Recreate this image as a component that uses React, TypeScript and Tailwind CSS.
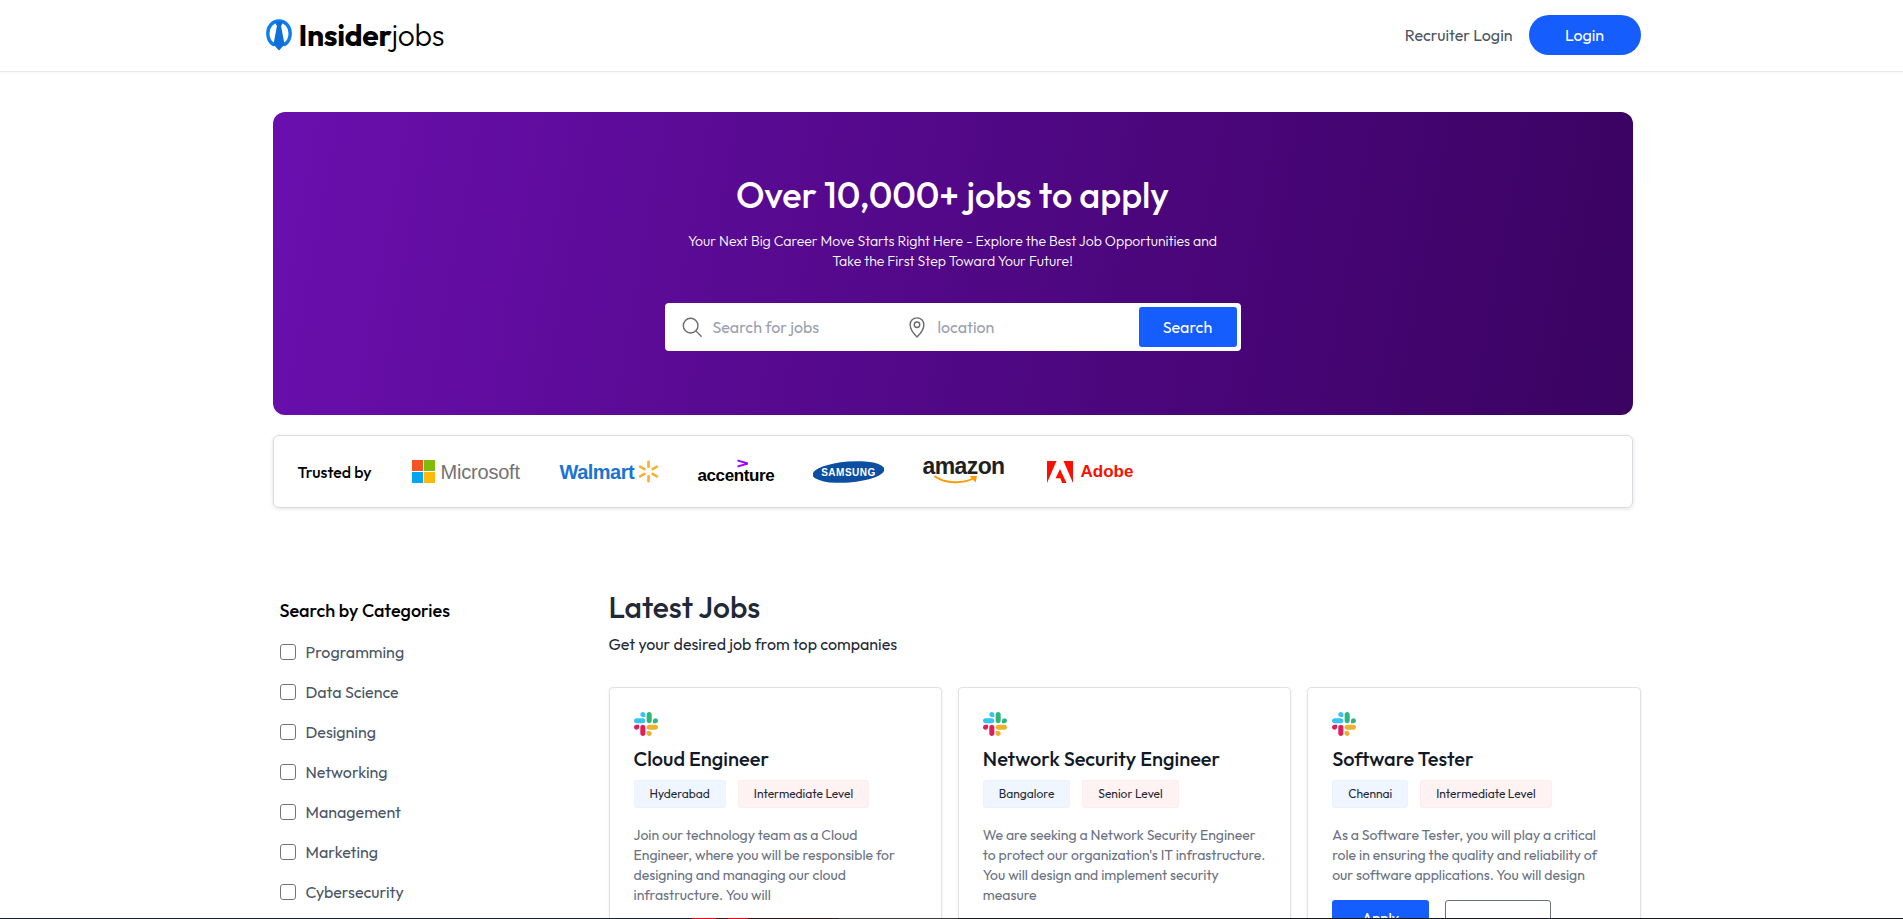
const F = "font-['Outfit','Lato','Noto_Sans',sans-serif]";
const A = "font-['Liberation_Sans',sans-serif]";

function Slack() {
  return (
    <svg viewBox="0 0 122.8 122.8" className="w-6 h-6">
      <path d="M25.8 77.6c0 7.1-5.8 12.9-12.9 12.9S0 84.7 0 77.6s5.8-12.9 12.9-12.9h12.9v12.9zm6.5 0c0-7.1 5.8-12.9 12.9-12.9s12.9 5.8 12.9 12.9v32.3c0 7.1-5.8 12.9-12.9 12.9s-12.9-5.8-12.9-12.9V77.6z" fill="#e01e5a" />
      <path d="M45.2 25.8c-7.1 0-12.9-5.8-12.9-12.9S38.1 0 45.2 0s12.9 5.8 12.9 12.9v12.9H45.2zm0 6.5c7.1 0 12.9 5.8 12.9 12.9s-5.8 12.9-12.9 12.9H12.9C5.8 58.1 0 52.3 0 45.2s5.8-12.9 12.9-12.9h32.3z" fill="#36c5f0" />
      <path d="M97 45.2c0-7.1 5.8-12.9 12.9-12.9s12.9 5.8 12.9 12.9-5.8 12.9-12.9 12.9H97V45.2zm-6.5 0c0 7.1-5.8 12.9-12.9 12.9s-12.9-5.8-12.9-12.9V12.9C64.7 5.8 70.5 0 77.6 0s12.9 5.8 12.9 12.9v32.3z" fill="#2eb67d" />
      <path d="M77.6 97c7.1 0 12.9 5.8 12.9 12.9s-5.8 12.9-12.9 12.9-12.9-5.8-12.9-12.9V97h12.9zm0-6.5c-7.1 0-12.9-5.8-12.9-12.9s5.8-12.9 12.9-12.9h32.3c7.1 0 12.9 5.8 12.9 12.9s-5.8 12.9-12.9 12.9H77.6z" fill="#ecb22e" />
    </svg>
  );
}

function Logo() {
  return (
    <div className="flex items-center gap-[7px] pl-[1px]">
      <svg viewBox="0 0 26 32" className="w-[26px] h-[32px]">
        <path d="M7.500 25.500C3.600 23.200 1.800 19 1.800 14.200 1.800 7.500 6.500 2 13 2s11.200 5.500 11.200 12.200c0 4.800-1.800 9-5.700 11.300" fill="none" stroke="#0f7cf0" strokeWidth="3.400" strokeLinecap="round" />
        <path d="M8.500 2.500h9l-2.400 4.500 3.400 18.500L13 31.500l-5.500-6L10.900 7z" fill="#0f6fd8" />
      </svg>
      <div className="text-[30px] leading-none text-black tracking-[-0.3px]">
        <span className="font-bold">Insider</span>
        <span className="font-light">jobs</span>
      </div>
    </div>
  );
}

function Walmart() {
  return (
    <div className="flex items-center gap-[3px] w-[98px]">
      <span className={`text-[20px] font-bold text-[#1b74d2] leading-none tracking-[-0.5px] ${A}`}>Walmart</span>
      <svg viewBox="0 0 24 24" className="w-[23px] h-[23px] shrink-0">
        {[0, 60, 120, 180, 240, 300].map((a) => (
          <rect key={a} x="10.600" y="0.500" width="2.800" height="8" rx="1.400" fill="#fbb034" transform={`rotate(${a} 12 12)`} />
        ))}
      </svg>
    </div>
  );
}

function Logos() {
  return (
    <div className="flex items-center">
      <span className="text-[16px] font-medium text-black ml-[24px] w-[114px]">Trusted by</span>
      <div className="flex items-center gap-[6px] w-[148px]">
        <div className="grid grid-cols-2 gap-[1px] w-[23px] h-[23px] shrink-0">
          <div className="bg-[#f35325]" />
          <div className="bg-[#81bc06]" />
          <div className="bg-[#05a6f0]" />
          <div className="bg-[#ffba08]" />
        </div>
        <span className={`text-[20px] leading-none text-[#737373] tracking-[-0.2px] ${A}`}>Microsoft</span>
      </div>
      <Walmart />
      <div className="relative ml-[40px] w-[115px] h-[24px]">
        <span className={`absolute left-0 bottom-0 text-[17px] font-bold text-black leading-none tracking-[-0.4px] ${A}`}>accenture</span>
        <svg viewBox="0 0 12 9" className="absolute left-[39px] top-[-1px] w-[12px] h-[9px]">
          <path d="M0.500 0.500 11 3.500v2L0.500 8.500V6.500L7.500 4.500 0.500 2.500z" fill="#a100ff" />
        </svg>
      </div>
      <svg viewBox="0 0 71 24" className="w-[71px] h-[24px] shrink-0">
        <ellipse cx="35.500" cy="12" rx="36" ry="10.500" fill="#0b4ea2" transform="rotate(-4.500 35.500 12)" />
        <text x="35.500" y="15.500" textAnchor="middle" fontSize="10" fontWeight="700" fill="#fff" fontFamily="Liberation Sans" letterSpacing="0.500">SAMSUNG</text>
      </svg>
      <div className="relative ml-[39px] w-[124px] h-[27px]">
        <span className={`absolute left-0 top-[-3px] text-[23px] font-bold leading-none text-[#221f1f] tracking-[-0.6px] ${A}`}>amazon</span>
        <svg viewBox="0 0 44 10" className="absolute left-[11px] top-[17px] w-[44px] h-[10px]">
          <path d="M1 1.500c10 7 28 8 40 1" fill="none" stroke="#f90" strokeWidth="2" strokeLinecap="round" />
          <path d="M35.500 1h7.500l-1.500 6.500z" fill="#f90" />
        </svg>
      </div>
      <div className="flex items-center gap-[8px]">
        <svg viewBox="0 0 26 22" className="w-[26px] h-[22px] shrink-0">
          <path d="M0 0h9.500L0 22zM16.500 0H26v22zM13 8l6.500 14h-4.300l-1.900-4.800H8.600z" fill="#fa0f00" />
        </svg>
        <span className={`text-[17px] font-bold leading-none text-[#fa0f00] ${A}`}>Adobe</span>
      </div>
    </div>
  );
}

const cats = ["Programming", "Data Science", "Designing", "Networking", "Management", "Marketing", "Cybersecurity"];

const jobs = [
  { t: "Cloud Engineer", loc: "Hyderabad", lvl: "Intermediate Level", d: ["Join our technology team as a Cloud", "Engineer, where you will be responsible for", "designing and managing our cloud", "infrastructure. You will"] },
  { t: "Network Security Engineer", loc: "Bangalore", lvl: "Senior Level", d: ["We are seeking a Network Security Engineer", "to protect our organization's IT infrastructure.", "You will design and implement security", "measure"] },
  { t: "Software Tester", loc: "Chennai", lvl: "Intermediate Level", d: ["As a Software Tester, you will play a critical", "role in ensuring the quality and reliability of", "our software applications. You will design"] },
];

function Card({ j }: { j: (typeof jobs)[number] }) {
  return (
    <div className="border border-[#e2e2e2] rounded-[4px] shadow-[0_1px_3px_rgba(0,0,0,0.08)] p-6 bg-white">
      <Slack />
      <h4 className="font-medium text-xl mt-[9px] leading-7 text-[#111827]">{j.t}</h4>
      <div className="flex items-center gap-3 mt-[7px] text-xs text-[#1f2937]">
        <span className="bg-blue-50 border border-blue-100/30 rounded-[3px] px-[15px] h-7 flex items-center">{j.loc}</span>
        <span className="bg-red-50 border border-red-100/30 rounded-[3px] px-[15px] h-7 flex items-center">{j.lvl}</span>
      </div>
      <p className="text-gray-500 text-sm leading-5 mt-[17px]">
        {j.d.map((l) => (
          <span key={l} className="block whitespace-nowrap">{l}</span>
        ))}
      </p>
      <div className="flex gap-4 mt-[15px] text-sm font-medium">
        <button className="bg-[#155dfc] text-white px-4 py-2 rounded-[3px] w-[97px]">Apply now</button>
        <button className="text-gray-500 border border-gray-500 px-4 py-2 rounded-[3px] w-[106px]">Learn More</button>
      </div>
    </div>
  );
}

export default function App() {
  return (
    <div className={`h-[919px] overflow-hidden bg-white flex flex-col ${F}`}>
      <header className="h-[72px] shrink-0 border-b border-[#e8e8e8] shadow-[0_1px_2px_rgba(0,0,0,0.03)] pl-[2px]">
        <div className="w-[1376px] mx-auto h-full flex items-center justify-between pb-[1px]">
          <Logo />
          <div className="flex items-center gap-4">
            <span className="text-[16px] text-[#4b5563]">Recruiter Login</span>
            <button className="w-[112px] h-10 rounded-full bg-[#155dfc] text-white text-[16px]">Login</button>
          </div>
        </div>
      </header>

      <main className="flex-1 min-h-0 overflow-hidden pl-[2px]">
        <div className="w-[1376px] mx-auto">
          <section className="mx-2 mt-10 h-[303px] rounded-xl bg-linear-100 from-[#6a0fae] to-[#3a0361] text-white text-center pt-[63px]">
            <h2 className="text-4xl font-medium leading-10">Over 10,000+ jobs to apply</h2>
            <p className="text-sm leading-5 mt-4 w-[540px] mx-auto font-light">
              Your Next Big Career Move Starts Right Here - Explore the Best Job Opportunities and Take the First Step Toward Your Future!
            </p>
            <div className="w-[576px] h-[48px] mx-auto mt-[32px] bg-white rounded-[4px] flex items-center text-[16px] text-gray-400 text-left">
              <div className="flex items-center w-[241px] pl-4 gap-[10px]">
                <svg viewBox="0 0 24 24" className="w-[22px] h-[22px] text-[#6b6b6b] shrink-0" fill="none" stroke="currentColor" strokeWidth="1.500">
                  <circle cx="10.500" cy="10.500" r="8" />
                  <path d="M16.500 16.500 22 22" strokeLinecap="round" />
                </svg>
                <span>Search for jobs</span>
              </div>
              <div className="flex items-center gap-[10px]">
                <svg viewBox="0 0 24 24" className="w-[22px] h-[24px] text-[#6b6b6b] shrink-0" fill="none" stroke="currentColor" strokeWidth="1.500">
                  <path d="M12 23S4.500 15.500 4.500 9.500a7.500 7.500 0 0 1 15 0C19.500 15.500 12 23 12 23z" />
                  <circle cx="12" cy="9.500" r="3" />
                </svg>
                <span>location</span>
              </div>
              <button className="ml-auto mr-1 w-[98px] h-10 rounded-[3px] bg-[#155dfc] text-white text-center">Search</button>
            </div>
          </section>

          <section className="mx-2 mt-5 h-[73px] border border-[#d8dbe0] rounded-[6px] shadow-[0_1px_4px_rgba(0,0,0,0.12)] flex items-center">
            <Logos />
          </section>

          <div className="flex mt-[81px]">
            <aside className="w-[344px] shrink-0 pl-[15px] pt-[8px]">
              <h4 className="font-medium text-lg leading-7 text-black">Search by Categories</h4>
              <ul className="mt-[15px] flex flex-col gap-[16px] text-gray-600 text-[16px]">
                {cats.map((c) => (
                  <li key={c} className="flex items-center gap-[10px] h-[24px]">
                    <span className="w-4 h-4 border border-[#767676] rounded-[3px] bg-white" />
                    {c}
                  </li>
                ))}
              </ul>
            </aside>
            <section className="flex-1 min-w-0">
              <h3 className="font-medium text-3xl leading-9 text-[#1f2937]">Latest Jobs</h3>
              <p className="text-[16px] leading-6 mt-[7px] mb-[31px] text-[#1f2937]">Get your desired job from top companies</p>
              <div className="grid grid-cols-3 gap-4">
                {jobs.map((j) => (
                  <Card key={j.t} j={j} />
                ))}
              </div>
            </section>
          </div>
        </div>
      </main>

      <div className="h-[1px] shrink-0 flex bg-[#14181f]">
        <div className="w-[692px] bg-[#1a2230]" />
        <div className="w-[24px] bg-[#e01010]" />
        <div className="w-[12px] bg-[#3a1a1a]" />
        <div className="w-[20px] bg-[#e01010]" />
        <div className="w-[90px] bg-[#2a1a1a]" />
        <div className="w-[120px] bg-[#3a3a3a]" />
      </div>
    </div>
  );
}
